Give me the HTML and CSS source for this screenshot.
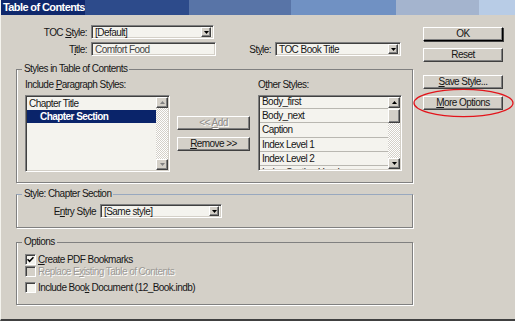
FILE: index.html
```html
<!DOCTYPE html>
<html>
<head>
  <link rel="stylesheet" href="styles.css">
</head>
<body>
  <div class="window">
    <div class="titlebar">
      <div class="band band-1"><span class="title">Table of Contents</span></div>
      <div class="band band-2"></div>
      <div class="band band-3"></div>
      <div class="band band-4"></div>
      <div class="band band-5"></div>
      <div class="band band-6"></div>
    </div>

    <div class="dialog">
      <div class="main">
        <div class="field-row row-toc">
          <label class="field-label">TOC <u>S</u>tyle:</label>
          <div class="select select-toc">
            <span class="select-text">[Default]</span>
            <span class="arrow-btn"><svg width="5" height="3" viewBox="0 0 5 3"><path d="M0 0h5L2.5 3z" fill="#000"/></svg></span>
          </div>
        </div>

        <div class="field-row row-title">
          <label class="field-label">T<u>i</u>tle:</label>
          <div class="text-input">Comfort Food</div>
          <label class="field-label style-label">St<u>y</u>le:</label>
          <div class="select select-style">
            <span class="select-text">TOC Book Title</span>
            <span class="arrow-btn"><svg width="5" height="3" viewBox="0 0 5 3"><path d="M0 0h5L2.5 3z" fill="#000"/></svg></span>
          </div>
        </div>

        <fieldset class="group group-styles">
          <legend>Styles in Table of Contents</legend>
          <div class="styles-cols">
            <div class="col-list">
              <div class="col-label">Include <u>P</u>aragraph Styles:</div>
              <div class="listbox listbox-include">
                <div class="list-items">
                  <div class="list-item">Chapter Title</div>
                  <div class="list-item selected">Chapter Section</div>
                </div>
                <div class="scrollbar">
                  <span class="arrow-btn scroll-arrow"><svg width="5" height="3" viewBox="0 0 5 3"><path d="M0 3h5L2.5 0z" fill="#808080"/></svg></span>
                  <span class="scroll-track"></span>
                  <span class="arrow-btn scroll-arrow"><svg width="5" height="3" viewBox="0 0 5 3"><path d="M0 0h5L2.5 3z" fill="#808080"/></svg></span>
                </div>
              </div>
            </div>

            <div class="col-mid">
              <button class="btn btn-add" disabled>&lt;&lt; <u>A</u>dd</button>
              <button class="btn btn-remove"><u>R</u>emove &gt;&gt;</button>
            </div>

            <div class="col-list col-other">
              <div class="col-label">O<u>t</u>her Styles:</div>
              <div class="listbox listbox-other">
                <div class="list-items other-items">
                  <div class="list-item row-line">Body_first</div>
                  <div class="list-item row-line">Body_next</div>
                  <div class="list-item row-line">Caption</div>
                  <div class="list-item row-line">Index Level 1</div>
                  <div class="list-item row-line">Index Level 2</div>
                  <div class="list-item row-line">Index Section Head</div>
                </div>
                <div class="scrollbar">
                  <span class="arrow-btn scroll-arrow"><svg width="5" height="3" viewBox="0 0 5 3"><path d="M0 3h5L2.5 0z" fill="#000"/></svg></span>
                  <span class="scroll-thumb"></span>
                  <span class="scroll-track"></span>
                  <span class="arrow-btn scroll-arrow"><svg width="5" height="3" viewBox="0 0 5 3"><path d="M0 0h5L2.5 3z" fill="#000"/></svg></span>
                </div>
              </div>
            </div>
          </div>
        </fieldset>

        <fieldset class="group group-entry">
          <legend>Style: Chapter Section</legend>
          <div class="field-row">
            <label class="field-label entry-label">E<u>n</u>try Style</label>
            <div class="select select-entry">
              <span class="select-text">[Same style]</span>
              <span class="arrow-btn"><svg width="5" height="3" viewBox="0 0 5 3"><path d="M0 0h5L2.5 3z" fill="#000"/></svg></span>
            </div>
          </div>
        </fieldset>

        <fieldset class="group group-options">
          <legend>Options</legend>
          <label class="check-row">
            <span class="checkbox"><svg width="7" height="7" viewBox="0 0 7 7"><path d="M0.5 3.2 2.6 5.3 6.5 1.2" fill="none" stroke="#000" stroke-width="1.6"/></svg></span>
            <span><u>C</u>reate PDF Bookmarks</span>
          </label>
          <label class="check-row disabled">
            <span class="checkbox"></span>
            <span>Replace E<u>x</u>isting Table of Contents</span>
          </label>
          <label class="check-row row-book">
            <span class="checkbox"></span>
            <span>Include Boo<u>k</u> Document (12_Book.indb)</span>
          </label>
        </fieldset>
      </div>

      <div class="side">
        <button class="btn btn-ok">OK</button>
        <button class="btn btn-reset">Reset</button>
        <button class="btn btn-save"><u>S</u>ave Style...</button>
        <button class="btn btn-more"><u>M</u>ore Options</button>
        <svg class="highlight" width="101" height="30" viewBox="0 0 101 30">
          <ellipse cx="50.5" cy="15" rx="49.5" ry="13.6" fill="none" stroke="#e3141b" stroke-width="1.3"/>
        </svg>
      </div>
    </div>
  </div>
</body>
</html>
```

FILE: styles.css
```css
body {
  margin: 0;
  font-family: "Liberation Sans", Arial, sans-serif;
  font-size: 10px;
  letter-spacing: -0.55px;
  color: #161616;
  background: #d4d0c8;
}
u {
  text-decoration-thickness: 1px;
  text-underline-offset: 1px;
}
.window {
  width: 515px;
  height: 321px;
  box-sizing: border-box;
  border-left: 1px solid #f4f3ee;
  border-bottom: 2px solid #404040;
  overflow: hidden;
}

/* title bar */
.titlebar {
  display: flex;
  height: 15px;
}
.band {
  height: 15px;
}
.band-1 { width: 84px; background: #0f286c; }
.band-2 { width: 104px; background: #2d4b8b; }
.band-3 { width: 102px; background: #5874a7; }
.band-4 { width: 105px; background: #7091c3; }
.band-5 { width: 83px; background: #a4b4ce; }
.band-6 { flex: 1; background: #b8cce6; }
.title {
  display: block;
  padding-left: 2px;
  color: #fff;
  font-weight: bold;
  font-size: 11px;
  line-height: 15px;
  letter-spacing: -0.6px;
  white-space: nowrap;
}

.dialog {
  display: flex;
  padding-left: 15px;
}
.main {
  width: 397px;
}
.side {
  position: relative;
  display: flex;
  flex-direction: column;
  width: 80px;
  margin-left: 10px;
  padding-top: 12px;
}

/* fields */
.field-row {
  display: flex;
  align-items: center;
  height: 14px;
}
.row-toc {
  margin-top: 10px;
}
.row-title {
  margin-top: 3px;
}
.field-label {
  width: 71px;
  padding-right: 4px;
  text-align: right;
  white-space: nowrap;
}
.style-label {
  width: 55px;
}
.select,
.text-input {
  display: flex;
  align-items: center;
  height: 14px;
  box-sizing: border-box;
  border: 1px solid;
  border-color: #808080 #fff #fff #808080;
  box-shadow: inset 1px 1px #404040, inset -1px -1px #d4d0c8;
  background: #f4f3ee;
  padding: 0 2px 0 3px;
  white-space: nowrap;
}
.select-toc { width: 123px; }
.text-input { width: 125px; color: #444; }
.select-style { width: 126px; }
.select-entry { width: 122px; }
.select-text {
  flex: 1;
}
.arrow-btn {
  display: flex;
  align-items: center;
  justify-content: center;
  width: 10px;
  height: 10px;
  box-sizing: border-box;
  border: 1px solid;
  border-color: #fff #404040 #404040 #fff;
  box-shadow: inset -1px -1px #808080;
  background: #d4d0c8;
}

/* group boxes */
.group {
  box-sizing: border-box;
  min-width: 0;
  width: 397px;
  margin: 0;
  padding: 0 10px 0 8px;
  border: 1px solid #808080;
  box-shadow: 1px 1px 0 #fff, inset 1px 0 0 #fff;
}
.group legend {
  margin-left: -3px;
  padding: 0 2px;
  line-height: 12px;
}
.group-styles {
  margin-top: 7px;
  padding-top: 4px;
  padding-bottom: 10px;
}
.group-entry {
  margin-top: 5px;
  padding-top: 4px;
  padding-bottom: 9px;
  border-top-color: #98a8bf;
}
.group-options {
  margin-top: 8px;
  padding-top: 5px;
  padding-bottom: 11px;
}

.styles-cols {
  display: flex;
}
.col-list {
  width: 145px;
}
.col-other {
  width: 144px;
}
.col-label {
  line-height: 12px;
  margin-bottom: 4px;
  white-space: nowrap;
}
.col-mid {
  display: flex;
  flex-direction: column;
  width: 73px;
  margin: 0 8px 0 7px;
  padding-top: 37px;
}
.col-mid .btn-remove {
  margin-top: 7px;
}

.listbox {
  display: flex;
  height: 77px;
  box-sizing: border-box;
  border: 1px solid;
  border-color: #808080 #fff #fff #808080;
  box-shadow: inset 1px 1px #404040, inset -1px -1px #d4d0c8;
  background: #f4f3ee;
  padding: 1px;
  overflow: hidden;
}
.listbox-other {
  height: 76px;
}
.list-items {
  flex: 1;
  overflow: hidden;
}
.list-item {
  height: 13px;
  line-height: 13px;
  padding-left: 2px;
  white-space: nowrap;
}
.list-item.selected {
  background: #0a246a;
  color: #fff;
  font-weight: bold;
  padding-left: 13px;
}
.other-items {
  margin-top: -2px;
}
.row-line {
  height: 14.2px;
  line-height: 14px;
  box-sizing: border-box;
  border-bottom: 1px solid #b9b7b1;
}
.scrollbar {
  display: flex;
  flex-direction: column;
  width: 12px;
}
.scroll-arrow {
  width: 12px;
  height: 11px;
}
.scroll-track {
  flex: 1;
  background: repeating-conic-gradient(#fff 0 25%, #d4d0c8 0 50%) 0 0 / 2px 2px;
}
.scroll-thumb {
  height: 14px;
  margin-top: 1px;
  box-sizing: border-box;
  border: 1px solid;
  border-color: #fff #404040 #404040 #fff;
  box-shadow: inset -1px -1px #808080;
  background: #d4d0c8;
}

/* buttons */
.btn {
  height: 14px;
  box-sizing: border-box;
  padding: 0;
  border: 1px solid;
  border-color: #fff #404040 #404040 #fff;
  box-shadow: inset -1px -1px #808080;
  background: #d4d0c8;
  font: inherit;
  letter-spacing: inherit;
  line-height: 12px;
  color: #161616;
  text-align: center;
  white-space: nowrap;
}
.btn:disabled {
  color: #8e8c88;
  text-shadow: 1px 1px #fff;
}
.btn-ok {
  border-color: #fff #000 #000 #fff;
  box-shadow: inset -1px -1px #808080, 1px 1px 0 #404040;
}
.btn-reset { margin-top: 7px; }
.btn-save { margin-top: 13px; }
.btn-more { margin-top: 7px; }
.highlight {
  position: absolute;
  left: -10px;
  top: 73px;
}

/* options */
.check-row {
  display: flex;
  align-items: center;
  height: 12px;
  white-space: nowrap;
}
.check-row.row-book {
  margin-top: 4px;
}
.checkbox {
  display: flex;
  align-items: center;
  justify-content: center;
  width: 11px;
  height: 11px;
  margin-right: 2px;
  box-sizing: border-box;
  border: 1px solid;
  border-color: #808080 #fff #fff #808080;
  box-shadow: inset 1px 1px #404040;
  background: #f4f3ee;
}
.check-row.disabled {
  color: #9c9a96;
  text-shadow: 1px 1px #fff;
}
.check-row.disabled .checkbox {
  background: #d4d0c8;
}
```
